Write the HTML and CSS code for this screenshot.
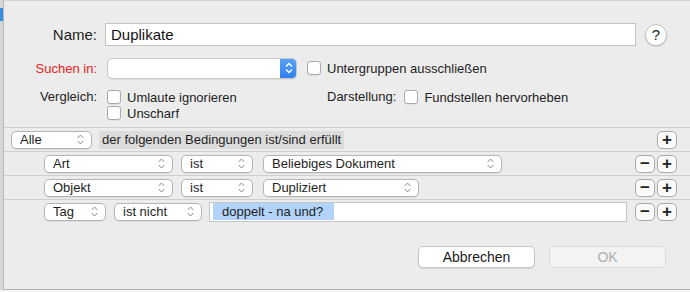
FILE: index.html
```html
<!DOCTYPE html>
<html lang="de">
<head>
  <meta charset="UTF-8">
  <title>Intelligente Gruppe</title>
  <link rel="stylesheet" href="styles.css">
</head>
<body>
  <div class="screen">
    <div class="backdrop"><span class="backdrop-tab"></span></div>

    <div class="dialog">
      <div class="row row-name">
        <label class="lbl lbl-big" for="name">Name:</label>
        <div class="text-field big" id="name">Duplikate</div>
        <button class="help">?</button>
      </div>

      <div class="row row-search">
        <span class="lbl red">Suchen in:</span>
        <div class="popup search-popup">
          <span class="stepper">
            <svg width="8" height="12" viewBox="0 0 8 12"><polyline points="1,4.5 4,1.5 7,4.5" fill="none" stroke="#fff" stroke-width="1.4"/><polyline points="1,7.5 4,10.5 7,7.5" fill="none" stroke="#fff" stroke-width="1.4"/></svg>
          </span>
        </div>
        <span class="check"><span class="box"></span>Untergruppen ausschließen</span>
      </div>

      <div class="row row-options">
        <span class="lbl">Vergleich:</span>
        <div class="checks">
          <span class="check"><span class="box"></span>Umlaute ignorieren</span>
          <span class="check"><span class="box"></span>Unscharf</span>
        </div>
        <span class="lbl-inline">Darstellung:</span>
        <span class="check"><span class="box"></span>Fundstellen hervorheben</span>
      </div>

      <div class="rules">
        <div class="rule">
          <div class="popup small w-alle">Alle<svg class="chev" width="7" height="11" viewBox="0 0 7 11"><polyline points="0.7,4 3.5,1 6.3,4" fill="none" stroke="#8a8a8a"/><polyline points="0.7,7 3.5,10 6.3,7" fill="none" stroke="#8a8a8a"/></svg></div>
          <span class="rule-caption">der folgenden Bedingungen ist/sind erfüllt</span>
          <div class="pm">
            <button class="pm-btn">+</button>
          </div>
        </div>

        <div class="rule indent">
          <div class="popup small w-field">Art<svg class="chev" width="7" height="11" viewBox="0 0 7 11"><polyline points="0.7,4 3.5,1 6.3,4" fill="none" stroke="#8a8a8a"/><polyline points="0.7,7 3.5,10 6.3,7" fill="none" stroke="#8a8a8a"/></svg></div>
          <div class="popup small w-op">ist<svg class="chev" width="7" height="11" viewBox="0 0 7 11"><polyline points="0.7,4 3.5,1 6.3,4" fill="none" stroke="#8a8a8a"/><polyline points="0.7,7 3.5,10 6.3,7" fill="none" stroke="#8a8a8a"/></svg></div>
          <div class="popup small w-value-long">Beliebiges Dokument<svg class="chev" width="7" height="11" viewBox="0 0 7 11"><polyline points="0.7,4 3.5,1 6.3,4" fill="none" stroke="#8a8a8a"/><polyline points="0.7,7 3.5,10 6.3,7" fill="none" stroke="#8a8a8a"/></svg></div>
          <div class="pm">
            <button class="pm-btn">&minus;</button>
            <button class="pm-btn">+</button>
          </div>
        </div>

        <div class="rule indent">
          <div class="popup small w-field">Objekt<svg class="chev" width="7" height="11" viewBox="0 0 7 11"><polyline points="0.7,4 3.5,1 6.3,4" fill="none" stroke="#8a8a8a"/><polyline points="0.7,7 3.5,10 6.3,7" fill="none" stroke="#8a8a8a"/></svg></div>
          <div class="popup small w-op">ist<svg class="chev" width="7" height="11" viewBox="0 0 7 11"><polyline points="0.7,4 3.5,1 6.3,4" fill="none" stroke="#8a8a8a"/><polyline points="0.7,7 3.5,10 6.3,7" fill="none" stroke="#8a8a8a"/></svg></div>
          <div class="popup small w-value">Dupliziert<svg class="chev" width="7" height="11" viewBox="0 0 7 11"><polyline points="0.7,4 3.5,1 6.3,4" fill="none" stroke="#8a8a8a"/><polyline points="0.7,7 3.5,10 6.3,7" fill="none" stroke="#8a8a8a"/></svg></div>
          <div class="pm">
            <button class="pm-btn">&minus;</button>
            <button class="pm-btn">+</button>
          </div>
        </div>

        <div class="rule indent">
          <div class="popup small w-tag">Tag<svg class="chev" width="7" height="11" viewBox="0 0 7 11"><polyline points="0.7,4 3.5,1 6.3,4" fill="none" stroke="#8a8a8a"/><polyline points="0.7,7 3.5,10 6.3,7" fill="none" stroke="#8a8a8a"/></svg></div>
          <div class="popup small w-opnot">ist nicht<svg class="chev" width="7" height="11" viewBox="0 0 7 11"><polyline points="0.7,4 3.5,1 6.3,4" fill="none" stroke="#8a8a8a"/><polyline points="0.7,7 3.5,10 6.3,7" fill="none" stroke="#8a8a8a"/></svg></div>
          <div class="text-field rule-field"><span class="selected">doppelt - na und?</span></div>
          <div class="pm">
            <button class="pm-btn">&minus;</button>
            <button class="pm-btn">+</button>
          </div>
        </div>
      </div>

      <div class="actions">
        <button class="push">Abbrechen</button>
        <button class="push disabled">OK</button>
      </div>
    </div>
  </div>
</body>
</html>
```

FILE: styles.css
```css
body {
  margin: 0;
  padding: 0;
  background-color: #f4f4f4;
  font-family: "Liberation Sans", Arial, sans-serif;
  font-size: 13px;
  color: #1e1e1e;
  overflow: hidden;
}

.screen {
  display: flex;
  height: 290px;
}

.backdrop {
  width: 3px;
  background: #d6d6d6;
  padding-top: 8px;
}

.backdrop-tab {
  display: block;
  height: 13px;
  background: #3b8fe0;
}

.dialog {
  flex: 1;
  background: #ececec;
  border-left: 1px solid #b9b9b9;
  border-top: 1px solid #d2d2d2;
  border-bottom: 1px solid #b4b4b4;
  display: flex;
  flex-direction: column;
}

.row {
  display: flex;
  align-items: center;
}

.lbl {
  width: 93px;
  text-align: right;
  margin-right: 8px;
  flex-shrink: 0;
}

.lbl-big {
  font-size: 15px;
  margin-right: 8px;
}

.red {
  color: #e8241c;
  margin-right: 10px;
}

/* name row */
.row-name {
  margin-top: 22px;
  height: 23px;
}

.text-field {
  background: #fff;
  border: 1px solid #c4c4c4;
  box-sizing: border-box;
}

.text-field.big {
  width: 531px;
  height: 23px;
  padding: 1px 5px;
  font-size: 15px;
  line-height: 20px;
  color: #111;
}

.help {
  margin-left: 9px;
  width: 22px;
  height: 22px;
  border-radius: 50%;
  border: 1px solid #c2c2c2;
  background: #fff;
  box-shadow: 0 1px 1px rgba(0, 0, 0, 0.12);
  font-family: "Liberation Sans", Arial, sans-serif;
  font-size: 15px;
  color: #222;
  padding: 0;
  line-height: 20px;
}

/* search row */
.row-search {
  margin-top: 11px;
  height: 22px;
}

.popup {
  display: flex;
  align-items: center;
  justify-content: space-between;
  box-sizing: border-box;
  background: #fff;
  border: 1px solid #bdbdbd;
  border-radius: 5px;
  box-shadow: 0 1px 0 rgba(0, 0, 0, 0.06);
}

.search-popup {
  width: 190px;
  height: 21px;
  justify-content: flex-end;
  overflow: hidden;
  border-color: #c8c8c8;
}

.stepper {
  width: 17px;
  height: 21px;
  margin-right: -1px;
  background: linear-gradient(#5aa3f9, #2e7ef2);
  display: flex;
  align-items: center;
  justify-content: center;
}

.check {
  display: flex;
  align-items: center;
  height: 16px;
}

.row-search .check {
  margin-left: 10px;
}

.box {
  width: 12px;
  height: 12px;
  background: #fff;
  border: 1px solid #aaaaaa;
  border-radius: 3px;
  margin-right: 6px;
  box-shadow: 0 1px 0 rgba(0, 0, 0, 0.05);
}

/* options row */
.row-options {
  margin-top: 10px;
  align-items: flex-start;
}

.row-options .lbl {
  line-height: 16px;
  margin-right: 10px;
}

.checks {
  display: flex;
  flex-direction: column;
  width: 220px;
}

.lbl-inline {
  line-height: 16px;
  margin-right: 8px;
}

/* rules */
.rules {
  margin-top: 6px;
}

.rule {
  display: flex;
  align-items: center;
  height: 23px;
  border-top: 1px solid #cfcfcf;
  padding-left: 7px;
  padding-right: 13px;
}

.rule.indent {
  padding-left: 40px;
}

.popup.small {
  height: 18px;
  padding: 0 7px 0 8px;
  font-size: 13px;
  margin-right: 8px;
  border-color: #b4b4b4;
}

.chev {
  flex-shrink: 0;
}

.w-alle { width: 81px; }
.w-field { width: 129px; }
.w-op { width: 72px; margin-right: 10px !important; }
.w-value-long { width: 239px; }
.w-value { width: 156px; }
.w-tag { width: 62px; }
.w-opnot { width: 88px; margin-right: 7px !important; }

.rule-caption {
  background: #dcdcdc;
  padding: 1px 3px 2px 3px;
  margin-left: -1px;
  line-height: 15px;
}

.rule-field {
  width: 418px;
  height: 20px;
  padding: 1px 3px;
  display: flex;
  align-items: center;
}

.selected {
  background: #b2d4fb;
  padding: 1px 6px 1px 9px;
  width: 106px;
  line-height: 15px;
}

.pm {
  margin-left: auto;
  display: flex;
  gap: 2px;
}

.pm-btn {
  width: 20px;
  height: 18px;
  padding: 0;
  border: 1px solid #a9a9a9;
  border-radius: 5px;
  background: #fafafa;
  font-family: "Liberation Sans", Arial, sans-serif;
  font-size: 17px;
  font-weight: bold;
  line-height: 14px;
  color: #222;
}

/* bottom buttons */
.actions {
  margin-top: auto;
  margin-bottom: 21px;
  display: flex;
  justify-content: flex-end;
  gap: 14px;
  padding-right: 24px;
}

.push {
  width: 117px;
  height: 22px;
  background: #fff;
  border: 1px solid #c6c6c6;
  border-radius: 5px;
  box-shadow: 0 1px 1px rgba(0, 0, 0, 0.1);
  font-family: "Liberation Sans", Arial, sans-serif;
  font-size: 14px;
  color: #1a1a1a;
  padding: 0;
}

.push.disabled {
  background: #f3f3f3;
  color: #b0b0b0;
  border-color: #dadada;
  box-shadow: none;
}
```
